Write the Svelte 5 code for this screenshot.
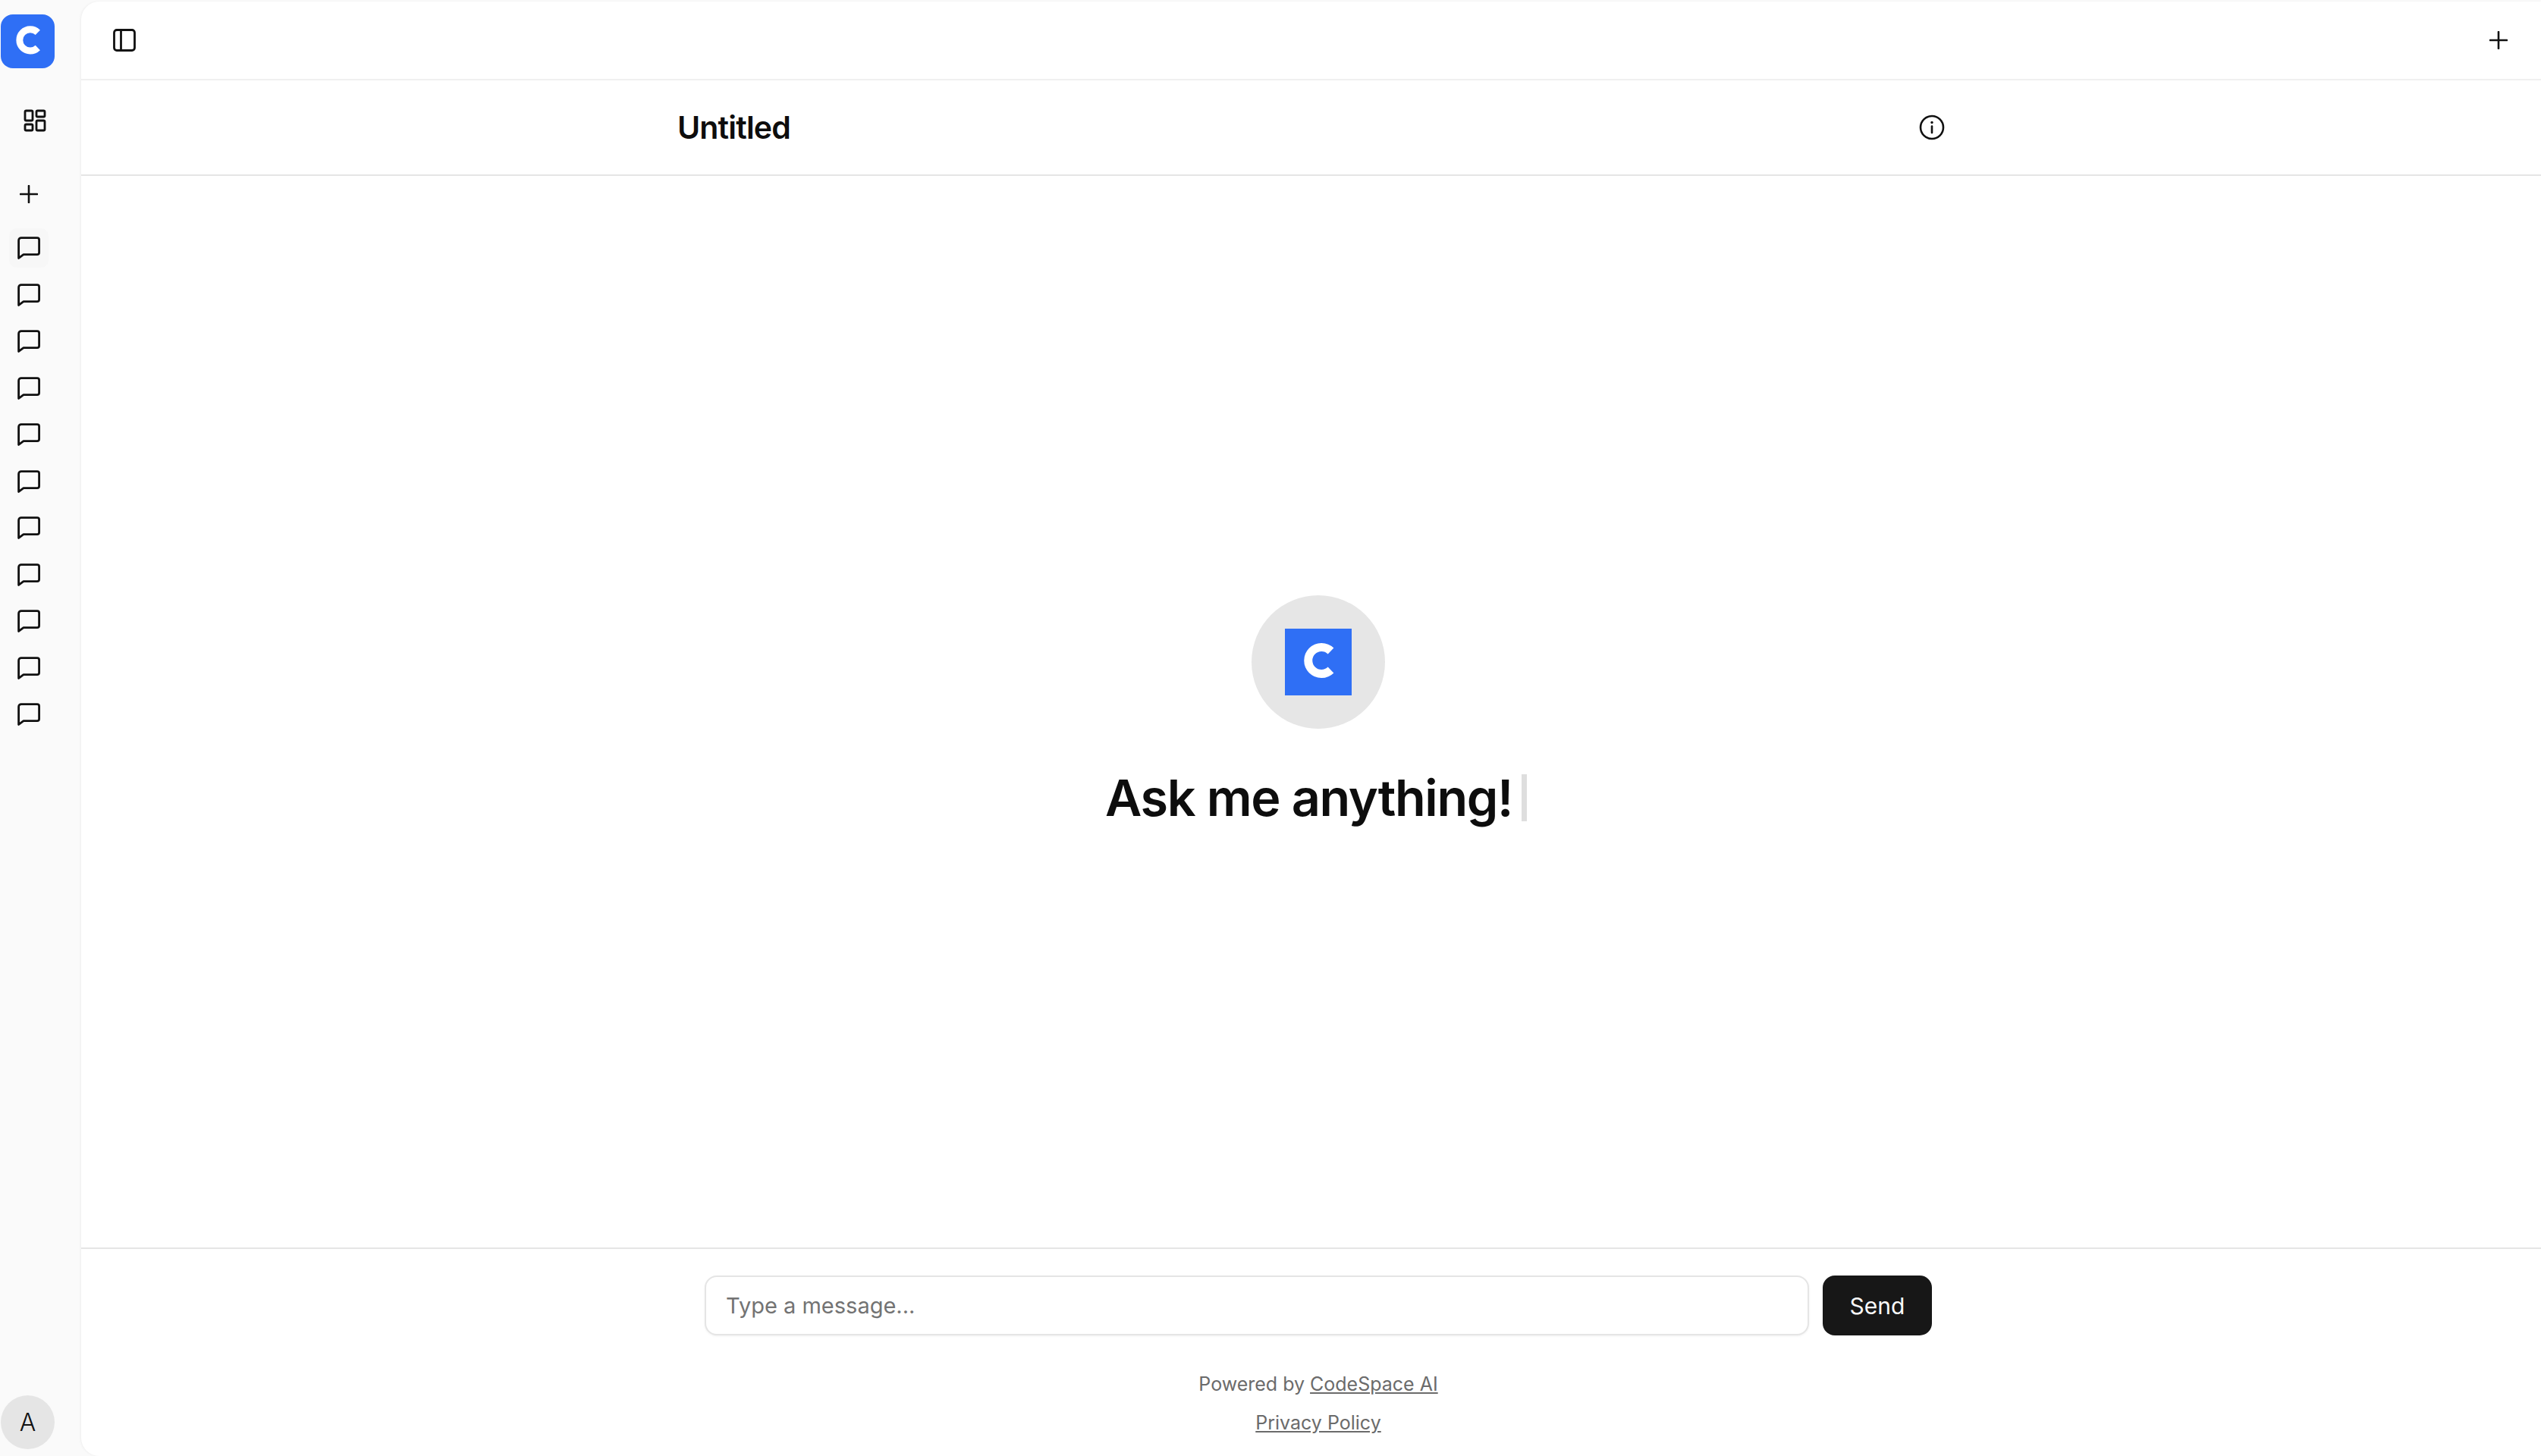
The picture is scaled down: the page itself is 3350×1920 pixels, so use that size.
<script>
	const chats = Array.from({ length: 11 }, (_, i) => i)
</script>

{#snippet logoC()}
	<svg class="c" viewBox="0 0 88 88" aria-hidden="true">
		<path d="M60.5 29.5A17.5 17.5 0 1 0 60.5 54.5" fill="none" stroke="#fff" stroke-width="11" />
	</svg>
{/snippet}

{#snippet plus()}
	<svg class="plus" viewBox="0 0 24 24" aria-hidden="true">
		<path d="M12 1v22M1 12h22" fill="none" stroke="#111" stroke-width="2.6" stroke-linecap="round" />
	</svg>
{/snippet}

<div class="app">
	<aside class="sidebar">
		<div class="logo">{@render logoC()}</div>

		<button class="icon grid-btn" aria-label="Dashboard">
			<svg viewBox="0 0 30 30" aria-hidden="true">
				<g fill="none" stroke="#111" stroke-width="2.8">
					<rect x="2" y="2" width="10" height="13" rx="1.6" />
					<rect x="17" y="2" width="11" height="8" rx="1.6" />
					<rect x="2" y="20" width="10" height="8" rx="1.6" />
					<rect x="17" y="15" width="11" height="13" rx="1.6" />
				</g>
			</svg>
		</button>

		<button class="icon new-btn" aria-label="New chat">{@render plus()}</button>

		<div class="chats">
			{#each chats as i}
				<button class="chat" class:hover={i === 0} aria-label="Chat">
					<svg viewBox="0 0 30 30" aria-hidden="true">
						<path d="M5 1.6H26A2.6 2.6 0 0 1 28.6 4.2V21A2.6 2.6 0 0 1 26 23.6H8L1.6 28.4V5A3.4 3.4 0 0 1 5 1.6Z" fill="none" stroke="#111" stroke-width="2.8" stroke-linejoin="round" />
					</svg>
				</button>
			{/each}
		</div>

		<div class="avatar">A</div>
	</aside>

	<main class="panel">
		<header class="topbar">
			<button class="icon" aria-label="Toggle sidebar">
				<svg viewBox="0 0 30 30" aria-hidden="true">
					<g fill="none" stroke="#111" stroke-width="2.8">
						<rect x="1.5" y="1.5" width="27" height="27" rx="3.5" />
						<path d="M10.5 1.5V28.5" />
					</g>
				</svg>
			</button>
			<button class="icon" aria-label="New">{@render plus()}</button>
		</header>

		<div class="titlebar">
			<div class="titlebar-inner">
				<h2>Untitled</h2>
				<svg class="info" viewBox="0 0 34 34" aria-hidden="true">
					<circle cx="17" cy="17" r="15" fill="none" stroke="#111" stroke-width="2.6" />
					<path d="M17 15.5V24" stroke="#111" stroke-width="2.6" stroke-linecap="round" />
					<circle cx="17" cy="10.5" r="1.7" fill="#111" />
				</svg>
			</div>
		</div>

		<section class="empty">
			<div class="circle">
				<div class="square">{@render logoC()}</div>
			</div>
			<h1>Ask me anything!<span class="cursor"></span></h1>
		</section>

		<footer class="composer">
			<form class="row" onsubmit={(e) => e.preventDefault()}>
				<input type="text" placeholder="Type a message..." />
				<button class="send">Send</button>
			</form>
			<p class="powered">Powered by <a href="#top">CodeSpace AI</a></p>
			<p class="privacy"><a href="#top">Privacy Policy</a></p>
		</footer>
	</main>
</div>

<style>
	:global(*) {
		box-sizing: border-box;
	}

	:global(body) {
		margin: 0;
		background: #fafafa;
		font-family: Inter, "Liberation Sans", sans-serif;
		color: #0d0d0d;
	}

	button {
		border: none;
		background: none;
		padding: 0;
		font: inherit;
		cursor: pointer;
	}

	.app {
		display: flex;
		height: 1920px;
		overflow: hidden;
	}

	.sidebar {
		width: 107px;
		flex-shrink: 0;
		display: flex;
		flex-direction: column;
		padding: 19px 0 9px 1px;
		background: #fafafa;
	}

	.logo {
		width: 71px;
		height: 71px;
		border-radius: 16px;
		background: #2f6ff5;
		flex-shrink: 0;
	}

	.c {
		display: block;
		width: 100%;
		height: 100%;
	}

	.icon {
		display: block;
		width: 30px;
		height: 30px;
	}

	.icon svg {
		display: block;
		width: 100%;
		height: 100%;
	}

	.grid-btn {
		margin: 54px 0 0 30px;
	}

	.new-btn {
		margin: 67px 0 0 22px;
	}

	.plus {
		width: 100%;
		height: 100%;
	}

	.new-btn .plus,
	.topbar .plus {
		padding: 3px;
	}

	.chats {
		display: flex;
		flex-direction: column;
		gap: 9.5px;
		margin: 30px 0 0 11px;
	}

	.chat {
		width: 52px;
		height: 52px;
		display: flex;
		align-items: center;
		justify-content: center;
		border-radius: 10px;
	}

	.chat.hover {
		background: #f7f7f7;
	}

	.chat svg {
		width: 30px;
		height: 30px;
	}

	.avatar {
		margin-top: auto;
		width: 71px;
		height: 71px;
		border-radius: 50%;
		background: #e5e5e5;
		display: flex;
		align-items: center;
		justify-content: center;
		font-size: 32px;
		font-weight: 300;
		color: #111;
	}

	.panel {
		flex: 1;
		min-width: 0;
		margin-top: 2px;
		background: #fff;
		border-radius: 24px 0 0 24px;
		box-shadow: -1px 0 3px rgba(0, 0, 0, 0.05);
		display: flex;
		flex-direction: column;
	}

	.topbar {
		height: 104px;
		flex-shrink: 0;
		display: flex;
		align-items: center;
		justify-content: space-between;
		padding: 0 41px 0 42px;
		border-bottom: 2px solid #f0f0f0;
	}

	.titlebar {
		height: 126px;
		flex-shrink: 0;
		border-bottom: 2px solid #e5e5e5;
	}

	.titlebar-inner {
		width: 1671px;
		height: 100%;
		margin: 0 auto;
		display: flex;
		align-items: center;
		justify-content: space-between;
	}

	h2 {
		margin: 0;
		font-size: 41px;
		font-weight: 600;
		letter-spacing: -0.02em;
	}

	.info {
		width: 34px;
		height: 34px;
	}

	.empty {
		flex: 1;
		display: flex;
		flex-direction: column;
		align-items: center;
		padding-left: 19px;
		padding-top: 553px;
	}

	.circle {
		width: 176px;
		height: 176px;
		border-radius: 50%;
		background: #e6e6e6;
		display: flex;
		align-items: center;
		justify-content: center;
	}

	.square {
		width: 88px;
		height: 88px;
		background: #2f6ff5;
	}

	h1 {
		margin: 50px 0 0;
		font-size: 66.5px;
		line-height: 82px;
		font-weight: 600;
		letter-spacing: -0.02em;
		display: flex;
		align-items: center;
	}

	.cursor {
		display: block;
		width: 7px;
		height: 62px;
		margin: 0 6px 0 12px;
		background: #dedede;
	}

	.composer {
		height: 275px;
		flex-shrink: 0;
		border-top: 2px solid #e5e5e5;
		padding: 35px 0 0 19px;
		display: flex;
		flex-direction: column;
		align-items: center;
	}

	.row {
		width: 1618px;
		display: flex;
		gap: 18px;
	}

	input {
		flex: 1;
		min-width: 0;
		height: 79px;
		padding: 0 26px;
		border: 2px solid #e5e5e5;
		border-radius: 16px;
		box-shadow: 0 1px 3px rgba(0, 0, 0, 0.06);
		font: inherit;
		font-size: 29px;
		outline: none;
		background: #fff;
	}

	input::placeholder {
		color: #737373;
	}

	.send {
		width: 144px;
		height: 79px;
		border-radius: 16px;
		background: #171717;
		color: #fafafa;
		font-size: 30px;
		font-weight: 400;
	}

	p {
		margin: 0;
		font-size: 25px;
		line-height: 40px;
		color: #6b6b6b;
	}

	.powered {
		margin-top: 44px;
	}

	.privacy {
		margin-top: 11px;
	}

	a {
		color: inherit;
		text-decoration: underline;
	}
</style>
